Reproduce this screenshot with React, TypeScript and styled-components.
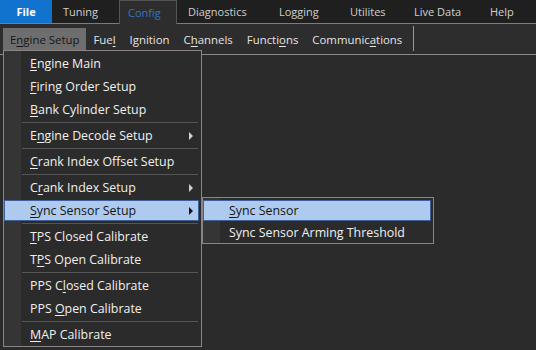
import React from "react";
import styled, { createGlobalStyle, css } from "styled-components";

const GlobalStyle = createGlobalStyle`
  html, body {
    margin: 0;
    padding: 0;
    background: #2b2b2b;
  }
  body {
    font-family: "Open Sans", "Noto Sans", "Liberation Sans", sans-serif;
  }
`;

const Screen = styled.div`
  position: relative;
  width: 536px;
  height: 350px;
  overflow: hidden;
  background: #2b2b2b;
`;

const TopBar = styled.div`
  display: flex;
  height: 23px;
  background: #1f1f1f;
  border-bottom: 1px solid #7c7c7c;
`;

const Tab = styled.div<{ w: number; kind?: "file" | "active" }>`
  box-sizing: border-box;
  width: ${({ w }) => w}px;
  height: 23px;
  padding-left: 11px;
  display: flex;
  align-items: center;
  font-size: 11px;
  color: #cfcfcf;
  ${({ kind }) =>
    kind === "file" &&
    css`
      background: #1273cf;
      color: #ffffff;
      font-weight: 700;
      justify-content: center;
      padding-left: 0;
    `}
  ${({ kind }) =>
    kind === "active" &&
    css`
      height: 24px;
      margin-bottom: -1px;
      padding-left: 8px;
      background: #2d2d2d;
      color: #2f76c2;
      border: 1px solid #555;
      border-bottom: none;
    `}
`;

const SubBar = styled.div`
  display: flex;
  align-items: flex-start;
  height: 31px;
  padding: 4px 0 0 3px;
  box-sizing: border-box;
  background: #2d2d2d;
  border-bottom: 1px solid #8a8a8a;
`;

const BarItem = styled.div<{ open?: boolean }>`
  height: 22px;
  padding: 0 7px;
  display: flex;
  align-items: center;
  font-size: 11.4px;
  color: #e4e4e4;
  white-space: pre;
  ${({ open }) =>
    open &&
    css`
      background: #6e6e6e;
      color: #161616;
    `}
`;

const BarDivider = styled.div`
  width: 1px;
  height: 25px;
  margin: -2px 0 0 4px;
  background: #9a9a9a;
`;

const Menu = styled.div<{ left: number; top: number; width: number }>`
  position: absolute;
  left: ${({ left }) => left}px;
  top: ${({ top }) => top}px;
  width: ${({ width }) => width}px;
  box-sizing: border-box;
  display: flex;
  flex-direction: column;
  padding-top: 1px;
  border: 1px solid #8c8484;
  background: linear-gradient(to right, #353535 0 17px, #2b2b2b 17px);
`;

const Item = styled.div<{ active?: boolean; short?: boolean }>`
  box-sizing: border-box;
  display: flex;
  align-items: center;
  height: 21px;
  margin: 1px 2px ${({ short }) => (short ? 0 : 1)}px 0;
  padding: 0 5px 0 25px;
  border: 1px solid transparent;
  font-size: 12.4px;
  color: #f0f0f0;
  white-space: nowrap;
  ${({ active }) =>
    active &&
    css`
      background: #aecbef;
      border-color: #3f6196;
      color: #141414;
    `}
`;

const Label = styled.span`
  white-space: pre;
`;

const Arrow = styled.span<{ dark?: boolean }>`
  margin-left: auto;
  width: 0;
  height: 0;
  border-top: 4px solid transparent;
  border-bottom: 4px solid transparent;
  border-left: 4px solid ${({ dark }) => (dark ? "#141414" : "#d0d0d0")};
`;

const Separator = styled.div`
  height: 1px;
  margin: 1px 3px 1px 18px;
  background: #555555;
`;

const U = styled.span`
  text-decoration: underline;
  text-underline-offset: 2px;
`;

type Entry =
  | { sep: true }
  | { pre: string; key?: string; post?: string; sub?: boolean; active?: boolean };

const entries: Entry[] = [
  { pre: "", key: "E", post: "ngine Main" },
  { pre: "", key: "F", post: "iring Order Setup" },
  { pre: "", key: "B", post: "ank Cylinder Setup" },
  { sep: true },
  { pre: "E", key: "n", post: "gine Decode Setup", sub: true },
  { sep: true },
  { pre: "", key: "C", post: "rank Index Offset Setup" },
  { sep: true },
  { pre: "C", key: "r", post: "ank Index Setup", sub: true },
  { pre: "", key: "S", post: "ync Sensor Setup", sub: true, active: true },
  { sep: true },
  { pre: "", key: "T", post: "PS Closed Calibrate" },
  { pre: "T", key: "P", post: "S Open Calibrate" },
  { sep: true },
  { pre: "PPS C", key: "l", post: "osed Calibrate" },
  { pre: "PPS ", key: "O", post: "pen Calibrate" },
  { sep: true },
  { pre: "", key: "M", post: "AP Calibrate" },
];

const tabs = [
  { label: "File", w: 52, kind: "file" as const },
  { label: "Tuning", w: 67 },
  { label: "Config", w: 58, kind: "active" as const },
  { label: "Diagnostics", w: 91 },
  { label: "Logging", w: 71 },
  { label: "Utilites", w: 64 },
  { label: "Live Data", w: 76 },
  { label: "Help", w: 57 },
];

const App = () => {
  return (
    <Screen>
      <GlobalStyle />
      <TopBar>
        {tabs.map((t) => (
          <Tab key={t.label} w={t.w} kind={t.kind}>
            {t.label}
          </Tab>
        ))}
      </TopBar>
      <SubBar>
        <BarItem open>
          <Label>
            E<U>n</U>gine Setup
          </Label>
        </BarItem>
        <BarItem>
          <Label>
            Fue<U>l</U>
          </Label>
        </BarItem>
        <BarItem>
          <Label>
            I<U>g</U>nition
          </Label>
        </BarItem>
        <BarItem>
          <Label>
            C<U>h</U>annels
          </Label>
        </BarItem>
        <BarItem>
          <Label>
            Functi<U>o</U>ns
          </Label>
        </BarItem>
        <BarItem>
          <Label>
            Communic<U>a</U>tions
          </Label>
        </BarItem>
        <BarDivider />
      </SubBar>

      <Menu left={3} top={50} width={199}>
        {entries.map((e, i) =>
          "sep" in e ? (
            <Separator key={i} />
          ) : (
            <Item key={i} active={e.active}>
              <Label>
                {e.pre}
                {e.key && <U>{e.key}</U>}
                {e.post}
              </Label>
              {e.sub && <Arrow dark={e.active} />}
            </Item>
          )
        )}
      </Menu>

      <Menu left={202} top={197} width={232}>
        <Item active short>
          <Label>
            <U>S</U>ync Sensor
          </Label>
        </Item>
        <Item short>
          <Label>Sync Sensor Arming Threshold</Label>
        </Item>
      </Menu>
    </Screen>
  );
};

export default App;
